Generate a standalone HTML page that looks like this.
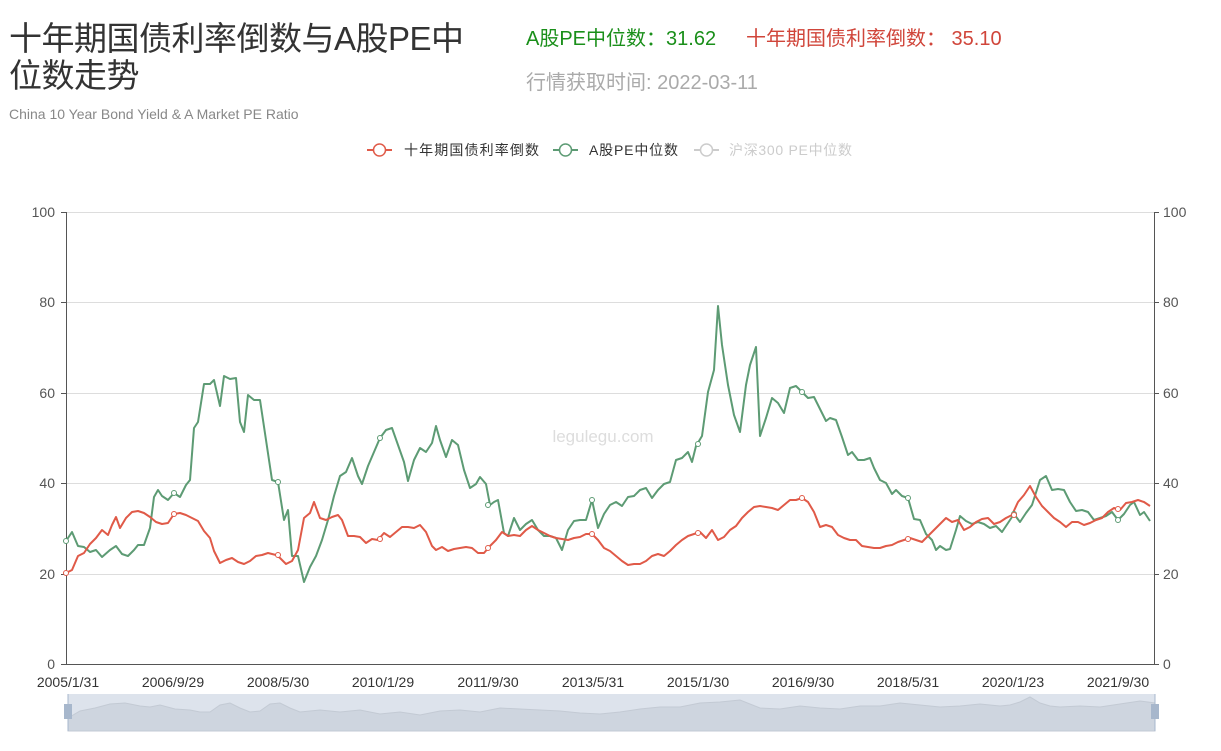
<!DOCTYPE html>
<html><head><meta charset="utf-8"><style>
body{margin:0;width:1221px;height:751px;background:#fff;font-family:"Liberation Sans","Noto Sans CJK SC",sans-serif;position:relative;overflow:hidden}
.a{position:absolute;white-space:nowrap}
</style></head><body>
<div class="a" style="left:9px;top:20px;font-size:33px;line-height:37px;color:#333;letter-spacing:-0.5px">十年期国债利率倒数与A股PE中<br>位数走势</div>
<div class="a" style="left:9px;top:106px;font-size:14px;color:#888">China 10 Year Bond Yield &amp; A Market PE Ratio</div>
<div class="a" style="left:526px;top:22px;font-size:20px;color:#1a8f1a">A股PE中位数：31.62</div>
<div class="a" style="left:746px;top:22px;font-size:20px;color:#d0453a">十年期国债利率倒数： 35.10</div>
<div class="a" style="left:526px;top:66px;font-size:20px;color:#aaa">行情获取时间: 2022-03-11</div>
<svg class="a" style="left:0;top:0" width="1221" height="751" font-family="Liberation Sans, Noto Sans CJK SC, sans-serif">
<g font-size="14">
<line x1="367" y1="150" x2="392" y2="150" stroke="#e05a48" stroke-width="2"/><circle cx="379.5" cy="150" r="6" fill="#fff" stroke="#e05a48" stroke-width="1.5"/>
<text x="404" y="155" fill="#333" textLength="135">十年期国债利率倒数</text>
<line x1="553" y1="150" x2="578" y2="150" stroke="#5d9b74" stroke-width="2"/><circle cx="565.5" cy="150" r="6" fill="#fff" stroke="#5d9b74" stroke-width="1.5"/>
<text x="589" y="155" fill="#333" textLength="89">A股PE中位数</text>
<line x1="694" y1="150" x2="719" y2="150" stroke="#ccc" stroke-width="2"/><circle cx="706.5" cy="150" r="6" fill="#fff" stroke="#ccc" stroke-width="1.5"/>
<text x="729" y="155" fill="#ccc" textLength="123">沪深300 PE中位数</text>
</g>
<g stroke="#ddd" stroke-width="1">
<line x1="66" y1="212.5" x2="1154" y2="212.5"/><line x1="66" y1="302.5" x2="1154" y2="302.5"/><line x1="66" y1="393.5" x2="1154" y2="393.5"/><line x1="66" y1="483.5" x2="1154" y2="483.5"/><line x1="66" y1="574.5" x2="1154" y2="574.5"/>
</g>
<g stroke="#555" stroke-width="1">
<line x1="66.5" y1="212" x2="66.5" y2="664"/><line x1="1154.5" y1="212" x2="1154.5" y2="664"/><line x1="66" y1="664.5" x2="1155" y2="664.5"/>
<line x1="61" y1="212.5" x2="66" y2="212.5"/><line x1="61" y1="302.5" x2="66" y2="302.5"/><line x1="61" y1="393.5" x2="66" y2="393.5"/><line x1="61" y1="483.5" x2="66" y2="483.5"/><line x1="61" y1="574.5" x2="66" y2="574.5"/><line x1="61" y1="664.5" x2="66" y2="664.5"/>
<line x1="1154" y1="212.5" x2="1159" y2="212.5"/><line x1="1154" y1="302.5" x2="1159" y2="302.5"/><line x1="1154" y1="393.5" x2="1159" y2="393.5"/><line x1="1154" y1="483.5" x2="1159" y2="483.5"/><line x1="1154" y1="574.5" x2="1159" y2="574.5"/><line x1="1154" y1="664.5" x2="1159" y2="664.5"/>
</g>
<g font-size="14" fill="#555" text-anchor="end">
<text x="55" y="217">100</text><text x="55" y="307">80</text><text x="55" y="398">60</text><text x="55" y="488">40</text><text x="55" y="579">20</text><text x="55" y="669">0</text>
</g>
<g font-size="14" fill="#555">
<text x="1163" y="217">100</text><text x="1163" y="307">80</text><text x="1163" y="398">60</text><text x="1163" y="488">40</text><text x="1163" y="579">20</text><text x="1163" y="669">0</text>
</g>
<g font-size="14" fill="#333" text-anchor="middle">
<text x="68" y="687">2005/1/31</text><text x="173" y="687">2006/9/29</text><text x="278" y="687">2008/5/30</text><text x="383" y="687">2010/1/29</text><text x="488" y="687">2011/9/30</text><text x="593" y="687">2013/5/31</text><text x="698" y="687">2015/1/30</text><text x="803" y="687">2016/9/30</text><text x="908" y="687">2018/5/31</text><text x="1013" y="687">2020/1/23</text><text x="1118" y="687">2021/9/30</text>
</g>
<text x="603" y="442" font-size="17" fill="#ddd" text-anchor="middle">legulegu.com</text>
<polyline fill="none" stroke="#5d9b74" stroke-width="2" stroke-linejoin="round" points="66,541 72,532 78,546 84,547 90,552 96,550 102,557 110,550 116,546 122,554 128,556 134,550 138,545 144,545 150,528 154,497 158,490 162,496 168,500 174,493 180,497 186,485 190,480 194,428 198,422 204,384 210,384 214,380 220,406 224,376 230,379 236,378 240,422 244,432 248,395 254,400 260,400 266,440 272,480 278,482 284,520 288,510 292,556 298,556 304,582 310,567 316,556 322,540 328,520 334,496 340,476 346,472 352,458 358,476 362,484 368,466 374,452 380,438 386,430 392,428 398,445 404,462 408,481 414,460 420,448 426,452 432,443 436,426 440,440 446,457 452,440 458,445 464,470 470,488 476,484 480,477 486,484 490,505 494,502 498,500 504,533 508,536 514,518 520,530 526,524 532,520 538,530 544,536 550,536 556,538 562,550 568,530 574,521 580,520 586,520 592,500 598,528 604,514 610,505 616,502 622,506 628,497 634,496 640,490 646,488 652,498 658,490 664,484 670,482 676,460 682,458 688,452 692,462 696,446 702,436 708,392 714,370 718,306 722,345 728,385 734,415 740,432 746,385 750,365 756,347 760,436 766,418 772,398 778,403 784,413 790,388 796,386 802,392 808,398 814,397 820,409 826,421 830,418 836,420 842,437 848,455 852,452 858,460 864,460 870,458 874,468 880,480 886,483 892,494 896,490 902,496 908,498 914,519 920,520 926,534 932,540 936,550 940,546 946,550 950,549 956,530 960,516 966,521 972,524 978,522 984,524 990,528 996,526 1002,532 1008,523 1014,514 1020,522 1026,513 1032,505 1040,480 1046,476 1052,490 1058,489 1064,490 1070,502 1076,511 1082,510 1088,512 1094,520 1100,518 1106,516 1112,512 1118,520 1124,514 1130,505 1134,502 1140,515 1144,512 1150,521"/>
<polyline fill="none" stroke="#e05a48" stroke-width="2" stroke-linejoin="round" points="66,573 72,570 78,556 84,553 90,544 96,538 102,530 108,535 112,525 116,517 120,528 126,518 132,512 138,511 144,513 150,517 156,522 162,524 168,523 174,514 180,513 186,515 192,518 198,521 204,531 210,538 214,551 220,563 226,560 232,558 238,562 244,564 250,561 256,556 262,555 268,553 276,555 280,558 286,564 292,561 298,550 304,518 310,513 314,502 320,518 326,520 332,517 338,515 342,520 348,536 354,536 360,537 366,543 372,539 378,540 384,533 390,537 396,532 402,527 408,527 414,528 420,525 426,532 432,546 436,550 442,547 448,551 454,549 460,548 466,547 472,548 478,553 484,553 490,546 496,540 502,532 508,536 514,535 520,536 526,530 532,526 538,530 544,533 550,536 556,538 562,539 568,540 574,538 580,537 586,534 592,534 598,540 604,548 610,551 616,556 622,561 628,565 634,564 640,564 646,561 652,556 658,554 664,556 670,551 676,545 682,540 688,536 694,534 700,532 706,538 712,530 718,540 724,537 730,530 736,526 742,518 748,512 754,507 760,506 766,507 772,508 778,510 784,505 790,500 796,500 802,498 808,502 814,512 820,527 826,525 832,527 838,535 844,538 850,540 856,540 862,546 868,547 874,548 880,548 886,546 892,545 898,542 904,540 910,538 916,540 922,542 928,536 934,530 940,524 946,518 952,522 958,520 964,530 970,527 976,522 982,519 988,518 994,524 1000,522 1006,518 1012,515 1018,502 1024,495 1030,486 1036,497 1042,506 1048,512 1054,518 1060,522 1066,527 1072,522 1078,522 1084,525 1090,523 1096,520 1102,518 1108,512 1114,508 1120,510 1126,503 1132,502 1138,500 1144,502 1150,506"/>
<g fill="#fff" stroke-width="1">
<circle cx="66" cy="541" r="2.5" stroke="#5d9b74"/><circle cx="174" cy="493" r="2.5" stroke="#5d9b74"/><circle cx="278" cy="482" r="2.5" stroke="#5d9b74"/><circle cx="380" cy="438" r="2.5" stroke="#5d9b74"/><circle cx="488" cy="505" r="2.5" stroke="#5d9b74"/><circle cx="592" cy="500" r="2.5" stroke="#5d9b74"/><circle cx="698" cy="444" r="2.5" stroke="#5d9b74"/><circle cx="802" cy="392" r="2.5" stroke="#5d9b74"/><circle cx="908" cy="498" r="2.5" stroke="#5d9b74"/><circle cx="1014" cy="514" r="2.5" stroke="#5d9b74"/><circle cx="1118" cy="520" r="2.5" stroke="#5d9b74"/>
<circle cx="66" cy="573" r="2.5" stroke="#e05a48"/><circle cx="174" cy="514" r="2.5" stroke="#e05a48"/><circle cx="278" cy="555" r="2.5" stroke="#e05a48"/><circle cx="380" cy="539" r="2.5" stroke="#e05a48"/><circle cx="488" cy="548" r="2.5" stroke="#e05a48"/><circle cx="592" cy="534" r="2.5" stroke="#e05a48"/><circle cx="698" cy="533" r="2.5" stroke="#e05a48"/><circle cx="802" cy="498" r="2.5" stroke="#e05a48"/><circle cx="908" cy="539" r="2.5" stroke="#e05a48"/><circle cx="1014" cy="515" r="2.5" stroke="#e05a48"/><circle cx="1118" cy="509" r="2.5" stroke="#e05a48"/>
</g>
<rect x="68" y="694" width="1087" height="37" fill="#dde3ec"/>
<polygon fill="#ced5df" stroke="#c3cad4" stroke-width="1" points="68,731 68,718 80,711 95,708 110,704 125,703 140,706 150,707 160,705 175,709 190,710 200,712 210,712 220,705 230,703 240,708 250,712 260,711 270,704 280,703 290,708 300,712 320,710 340,712 360,710 380,714 400,712 420,715 440,711 460,710 480,712 500,708 520,709 540,710 560,711 580,713 600,714 620,712 640,709 660,707 680,707 700,703 720,702 740,700 760,708 780,709 800,706 820,708 840,709 860,706 880,706 900,703 920,705 940,707 960,706 980,704 1000,706 1010,705 1020,702 1030,697 1040,703 1050,706 1060,707 1080,706 1100,707 1120,704 1140,701 1155,703 1155,731"/>
<rect x="64" y="704" width="8" height="15" fill="#a7b7cc"/><rect x="1151" y="704" width="8" height="15" fill="#a7b7cc"/>
<line x1="68" y1="694" x2="68" y2="731" stroke="#a7b7cc"/><line x1="1155" y1="694" x2="1155" y2="731" stroke="#a7b7cc"/>
</svg>
</body></html>
